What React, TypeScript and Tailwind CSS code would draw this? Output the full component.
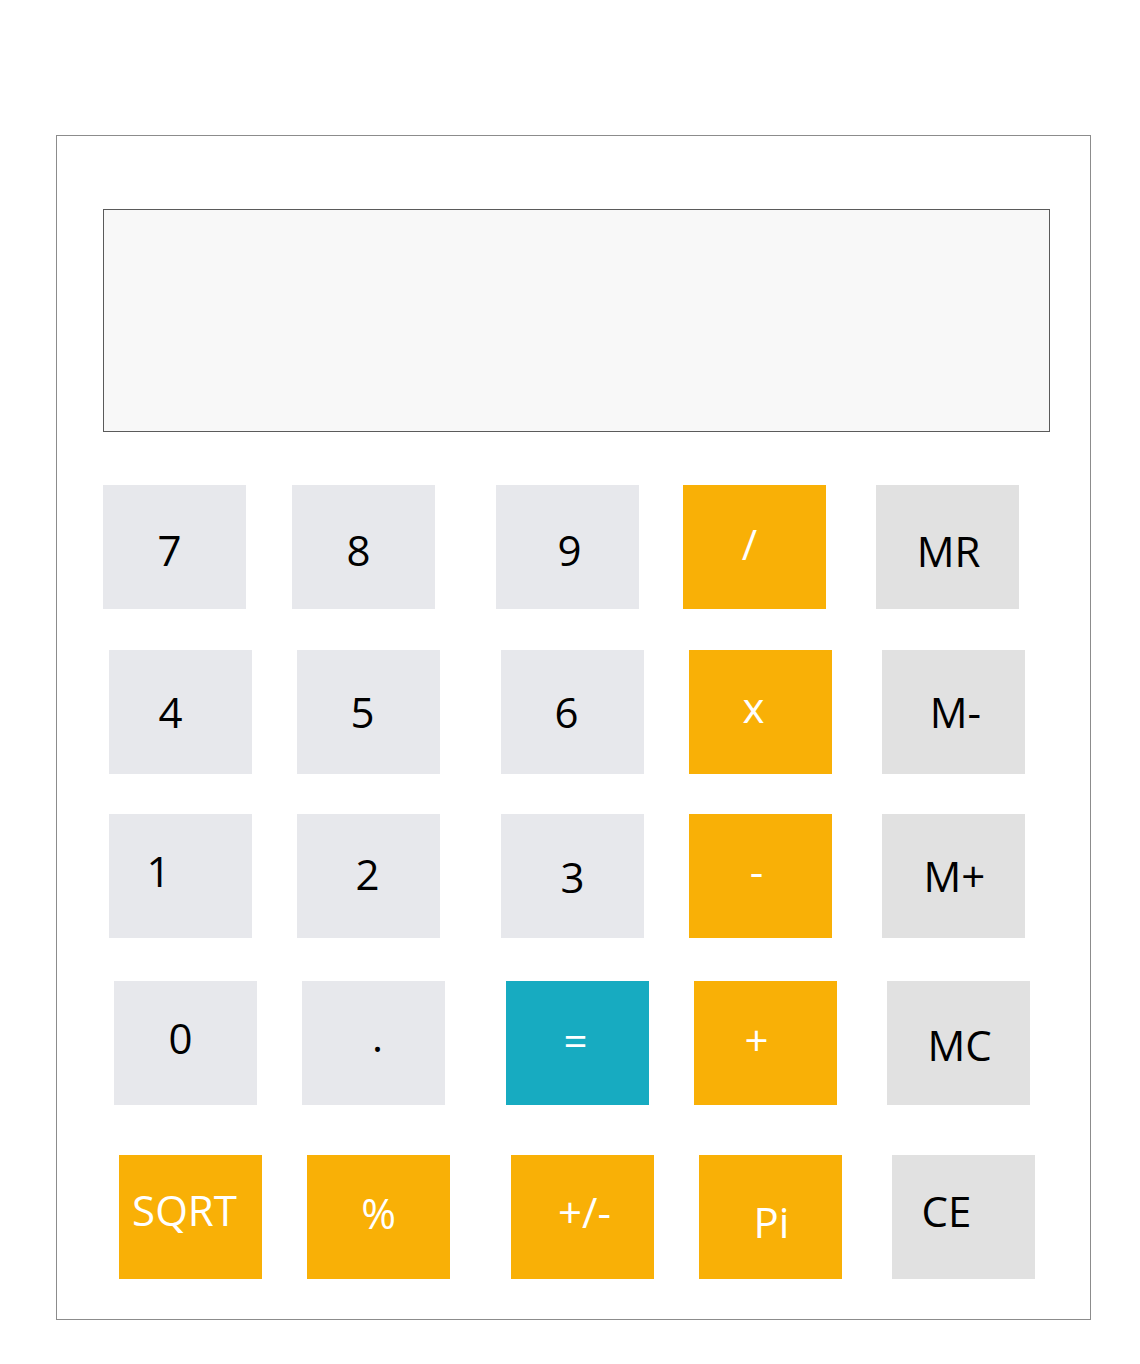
import React from "react";

type Btn = { label: string; bg: string; fg: string; ml: string; t: string };

const NUM = "bg-[#e7e8ec]";
const MEM = "bg-[#e1e1e1]";
const ORG = "bg-[#f9b006]";
const TEAL = "bg-[#17abc1]";
const BLK = "text-black";
const WHT = "text-white";

const rows: { pl: string; mt: string; btns: Btn[] }[] = [
  {
    pl: "pl-0",
    mt: "mt-[53px]",
    btns: [
      { label: "7", bg: NUM, fg: BLK, ml: "ml-0", t: "translate-x-[-5px] translate-y-[3px]" },
      { label: "8", bg: NUM, fg: BLK, ml: "ml-[46px]", t: "translate-x-[-5px] translate-y-[3px]" },
      { label: "9", bg: NUM, fg: BLK, ml: "ml-[61px]", t: "translate-x-[2px] translate-y-[3px]" },
      { label: "/", bg: ORG, fg: WHT, ml: "ml-[44px]", t: "translate-x-[-5px] translate-y-[-3px]" },
      { label: "MR", bg: MEM, fg: BLK, ml: "ml-[50px]", t: "translate-x-[1px] translate-y-[4px]" },
    ],
  },
  {
    pl: "pl-[6px]",
    mt: "mt-[41px]",
    btns: [
      { label: "4", bg: NUM, fg: BLK, ml: "ml-0", t: "translate-x-[-10px] translate-y-[0px]" },
      { label: "5", bg: NUM, fg: BLK, ml: "ml-[45px]", t: "translate-x-[-6px] translate-y-[0px]" },
      { label: "6", bg: NUM, fg: BLK, ml: "ml-[61px]", t: "translate-x-[-6px] translate-y-[0px]" },
      { label: "x", bg: ORG, fg: WHT, ml: "ml-[45px]", t: "translate-x-[-7px] translate-y-[-5px]" },
      { label: "M-", bg: MEM, fg: BLK, ml: "ml-[50px]", t: "translate-x-[2px] translate-y-[0px]" },
    ],
  },
  {
    pl: "pl-[6px]",
    mt: "mt-[40px]",
    btns: [
      { label: "1", bg: NUM, fg: BLK, ml: "ml-0", t: "translate-x-[-22px] translate-y-[-5px]" },
      { label: "2", bg: NUM, fg: BLK, ml: "ml-[45px]", t: "translate-x-[-1px] translate-y-[-2px]" },
      { label: "3", bg: NUM, fg: BLK, ml: "ml-[61px]", t: "translate-x-[0px] translate-y-[1px]" },
      { label: "-", bg: ORG, fg: WHT, ml: "ml-[45px]", t: "translate-x-[-4px] translate-y-[-5px]" },
      { label: "M+", bg: MEM, fg: BLK, ml: "ml-[50px]", t: "translate-x-[1px] translate-y-[0px]" },
    ],
  },
  {
    pl: "pl-[11px]",
    mt: "mt-[43px]",
    btns: [
      { label: "0", bg: NUM, fg: BLK, ml: "ml-0", t: "translate-x-[-5px] translate-y-[-5px]" },
      { label: ".", bg: NUM, fg: BLK, ml: "ml-[45px]", t: "translate-x-[4px] translate-y-[-7px]" },
      { label: "=", bg: TEAL, fg: WHT, ml: "ml-[61px]", t: "translate-x-[-2px] translate-y-[-3px]" },
      { label: "+", bg: ORG, fg: WHT, ml: "ml-[45px]", t: "translate-x-[-9px] translate-y-[-3px]" },
      { label: "MC", bg: MEM, fg: BLK, ml: "ml-[50px]", t: "translate-x-[1px] translate-y-[2px]" },
    ],
  },
  {
    pl: "pl-[16px]",
    mt: "mt-[50px]",
    btns: [
      { label: "SQRT", bg: ORG, fg: WHT, ml: "ml-0", t: "translate-x-[-6px] translate-y-[-7px]" },
      { label: "%", bg: ORG, fg: WHT, ml: "ml-[45px]", t: "translate-x-[0px] translate-y-[-4px]" },
      { label: "+/-", bg: ORG, fg: WHT, ml: "ml-[61px]", t: "translate-x-[2px] translate-y-[-5px]" },
      { label: "Pi", bg: ORG, fg: WHT, ml: "ml-[45px]", t: "translate-x-[1px] translate-y-[5px]" },
      { label: "CE", bg: MEM, fg: BLK, ml: "ml-[50px]", t: "translate-x-[-17px] translate-y-[-6px]" },
    ],
  },
];

export default function App() {
  return (
    <div
      className="w-[1140px] h-[1364px] bg-white pt-[135px] pl-[56px]"
      style={{ fontFamily: '"Open Sans", "Noto Sans", sans-serif' }}
    >
      <div className="w-[1035px] h-[1185px] border border-[#8c8c8c] pt-[73px] pl-[46px]">
        <div className="w-[947px] h-[223px] border border-[#5a5a5a] bg-[#f8f8f8]" />
        {rows.map((r, i) => (
          <div key={i} className={`flex ${r.pl} ${r.mt}`}>
            {r.btns.map((b) => (
              <div
                key={b.label}
                className={`w-[143px] h-[124px] flex items-center justify-center ${b.bg} ${b.ml}`}
              >
                <span className={`text-[42px] leading-[42px] font-normal ${b.fg} ${b.t}`}>
                  {b.label}
                </span>
              </div>
            ))}
          </div>
        ))}
      </div>
    </div>
  );
}
